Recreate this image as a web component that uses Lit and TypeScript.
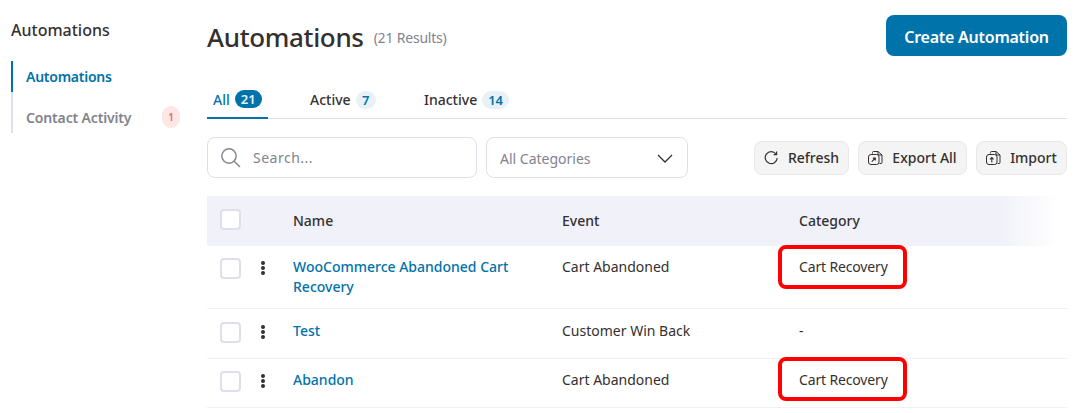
import { LitElement, html, css, svg } from "lit";
import { customElement } from "lit/decorators.js";

const rows = [
  { name: "WooCommerce Abandoned Cart Recovery", event: "Cart Abandoned", cat: "Cart Recovery", mark: true, cls: "r1" },
  { name: "Test", event: "Customer Win Back", cat: "-", mark: false, cls: "r2" },
  { name: "Abandon", event: "Cart Abandoned", cat: "Cart Recovery", mark: true, cls: "r3" },
];

const fileIcon = (up: boolean) => html`<svg width="15" height="14" viewBox="0 0 15 14" fill="none" stroke="#353030" stroke-width="1">
  <path d="M4.5 2.5V1.5a1 1 0 0 1 1-1H10l4 3.5v7.5a1 1 0 0 1-1 1h-1.5"/>
  <path d="M10 .5V4h4"/>
  <rect x=".5" y="3.5" width="10.5" height="10" rx="2.5"/>
  ${up
    ? svg`<path d="M5.8 11.5V6.8M4 8.4l1.8-1.8 1.8 1.8" stroke-width="1.1"/>`
    : svg`<path d="M3.8 10.6l3.2-3.2M4.8 7.1h2.5v2.5" stroke-width="1.1"/>`}
</svg>`;

@customElement("app-root")
export class AppRoot extends LitElement {
  static styles = css`
    :host {
      display: block;
      width: 1081px;
      height: 413px;
      overflow: hidden;
      background: #fff;
      font-family: "Noto Sans", "Open Sans", sans-serif;
      font-size: 14px;
      color: #353030;
    }
    .page { display: flex; padding-left: 11px; padding-right: 14px; }
    .side { width: 169px; flex: none; padding-top: 19px; margin-right: 27px; }
    .side h2 { margin: 0 0 20px; font-size: 16px; line-height: 22px; font-weight: 500; color: #353030; }
    .nav { display: flex; flex-direction: column; border-left: 2px solid #dedfea; }
    .nav a { display: flex; align-items: center; justify-content: space-between; height: 41px; box-sizing: border-box; padding-left: 13px; padding-top: 10px; font-weight: 600; letter-spacing: -0.15px; color: #82838e; margin-left: -2px; border-left: 2px solid transparent; }
    .nav a.on { height: 31px; color: #0073aa; border-left-color: #0073aa; padding-top: 0; padding-bottom: 1px; letter-spacing: -0.25px; }
    .nav .cnt { width: 18px; height: 22px; border-radius: 9px; background: #fde6e4; color: #e4685c; font-size: 10px; font-weight: 600; display: flex; align-items: center; justify-content: center; position: relative; top: -1px; }
    .main { flex: 1; min-width: 0; }
    .head { display: flex; align-items: center; justify-content: space-between; padding-top: 15px; height: 41px; }
    .titles { display: flex; align-items: baseline; gap: 10px; }
    .titles h1 { margin: 0; font-size: 26px; line-height: 36px; font-weight: 500; letter-spacing: -0.35px; color: #353030; position: relative; top: 1px; }
    .titles span { font-size: 14px; letter-spacing: -0.2px; color: #82838e; position: relative; top: -3px; }
    .create { width: 181px; height: 41px; box-sizing: border-box; border-radius: 8px; background: #0073aa; color: #fff; font-size: 16px; font-weight: 600; letter-spacing: -0.25px; display: flex; align-items: center; justify-content: center; padding-top: 2px; }
    .tabs { display: flex; margin-top: 25px; height: 38px; box-sizing: border-box; border-bottom: 1px solid #dedfea; }
    .tab { display: flex; align-items: center; gap: 5px; height: 37px; box-sizing: border-box; font-weight: 500; }
    .tab.on { height: 38px; color: #0073aa; border-bottom: 2px solid #0073aa; width: 61px; margin-right: 42px; padding: 0 6px; }
    .tab.a { margin-right: 36px; width: 78px; }
    .pill { height: 18px; min-width: 20px; padding: 0 6px; box-sizing: border-box; border-radius: 9px; background: #e8f1f6; color: #0073aa; font-size: 13px; font-weight: 600; line-height: 18px; text-align: center; }
    .tab.on .pill { background: #0073aa; color: #e8f1f6; min-width: 27px; }
    .tools { display: flex; align-items: center; margin-top: 18px; height: 41px; }
    .search { width: 270px; height: 41px; box-sizing: border-box; border: 1px solid #dedfea; border-radius: 8px; display: flex; align-items: center; gap: 12px; padding-left: 12px; color: #82838e; margin-right: 9px; }
    .search span { letter-spacing: 0.5px; }
    .select { width: 202px; height: 41px; box-sizing: border-box; border: 1px solid #dedfea; border-radius: 8px; display: flex; align-items: center; justify-content: space-between; padding: 2px 14px 0 13px; color: #82838e; }
    .actions { margin-left: auto; display: flex; gap: 9px; }
    .btn { height: 34px; box-sizing: border-box; border: 1px solid #e8e8ec; border-radius: 8px; background: #f4f4f5; display: flex; align-items: center; justify-content: center; gap: 10px; font-weight: 500; color: #353030; }
    .refresh { width: 95px; }
    .export { width: 109px; gap: 9px; }
    .import { width: 91px; gap: 9px; }
    .table { margin-top: 18px; }
    .row { display: grid; grid-template-columns: 86px 269px 237px 1fr; box-sizing: border-box; border-bottom: 1px solid #f0f0f6; line-height: 20px; }
    .row.h { height: 50px; background: linear-gradient(90deg, #f0f1f9 0, #f0f1f9 92%, #fff 99%); border: 0; font-weight: 500; }
    .r1 { height: 63px; }
    .r2 { height: 50px; }
    .r3 { height: 49px; }
    .cell { position: relative; padding-top: 11px; }
    .r2 .cell { padding-top: 12px; }
    .row.h .cell { padding-top: 15px; }
    .first { display: flex; align-items: flex-start; padding-left: 13px; }
    .row.h .first { padding-top: 13px; }
    .row .first.body { padding-top: 12px; }
    .r2 .first.body { padding-top: 13px; }
    .box { width: 21px; height: 21px; box-sizing: border-box; border: 2px solid #dedfea; border-radius: 4px; background: #fff; flex: none; }
    .dots { margin-left: 20px; margin-top: 3px; display: flex; flex-direction: column; gap: 1px; }
    .dots i { width: 4px; height: 4px; border-radius: 50%; background: #353030; display: block; }
    .name { color: #0073aa; font-weight: 500; width: 225px; }
    .cat { letter-spacing: -0.15px; }
    .mark { position: absolute; left: -21px; top: -1px; width: 129px; height: 44px; box-sizing: border-box; border: 4px solid #ff0000; border-radius: 8px; pointer-events: none; letter-spacing: 0; }
    .r3 .mark { top: -2px; }
  `;

  render() {
    return html`<div class="page">
      <aside class="side">
        <h2>Automations</h2>
        <nav class="nav">
          <a class="on">Automations</a>
          <a>Contact Activity <span class="cnt">1</span></a>
        </nav>
      </aside>
      <main class="main">
        <div class="head">
          <div class="titles"><h1>Automations</h1><span>(21 Results)</span></div>
          <div class="create">Create Automation</div>
        </div>
        <div class="tabs">
          <div class="tab on">All <span class="pill">21</span></div>
          <div class="tab a">Active <span class="pill">7</span></div>
          <div class="tab i">Inactive <span class="pill">14</span></div>
        </div>
        <div class="tools">
          <div class="search">
            <svg width="21" height="21" viewBox="0 0 21 21" fill="none" stroke="#82838e" stroke-width="1.4"><circle cx="9" cy="9" r="7.2"/><path d="M14.2 14.2L20 20"/></svg>
            <span>Search...</span>
          </div>
          <div class="select">All Categories
            <svg width="16" height="9" viewBox="0 0 16 9" fill="none" stroke="#353030" stroke-width="1.3"><path d="M1 1l7 7 7-7"/></svg>
          </div>
          <div class="actions">
            <div class="btn refresh">
              <svg width="14" height="14" viewBox="0 0 14 14" fill="none" stroke="#353030" stroke-width="1.2"><path d="M12 3A6 6 0 1 0 13.2 7"/><path d="M12.6 .5v3.2H9.6"/></svg>
              Refresh
            </div>
            <div class="btn export">${fileIcon(false)}Export All</div>
            <div class="btn import">${fileIcon(true)}Import</div>
          </div>
        </div>
        <div class="table">
          <div class="row h">
            <div class="cell first"><span class="box"></span></div>
            <div class="cell">Name</div><div class="cell">Event</div><div class="cell">Category</div>
          </div>
          ${rows.map(
            (r) => html`<div class="row ${r.cls}">
              <div class="cell first body"><span class="box"></span><span class="dots"><i></i><i></i><i></i></span></div>
              <div class="cell"><div class="name">${r.name}</div></div>
              <div class="cell">${r.event}</div>
              <div class="cell cat">${r.cat}${r.mark ? html`<span class="mark"></span>` : ""}</div>
            </div>`
          )}
        </div>
      </main>
    </div>`;
  }
}
